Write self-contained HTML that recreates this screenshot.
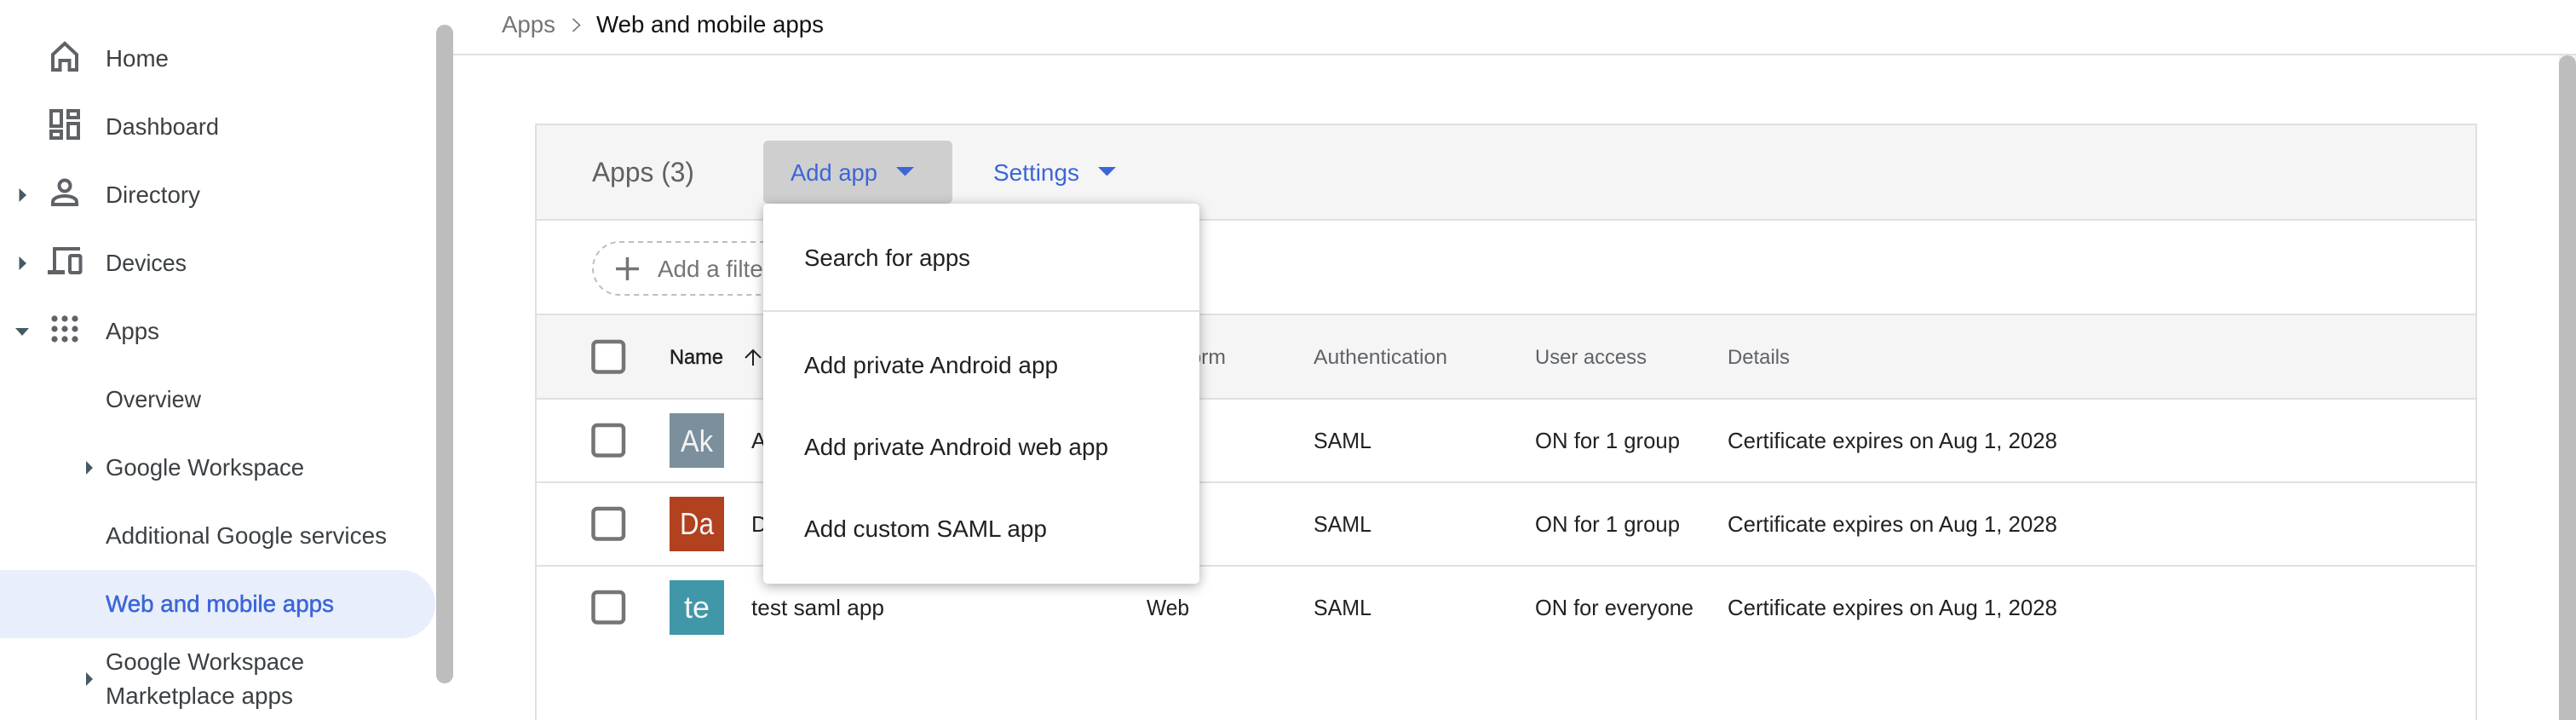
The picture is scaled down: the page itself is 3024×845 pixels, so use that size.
<!DOCTYPE html>
<html lang="en">
<head>
<meta charset="utf-8">
<title>Web and mobile apps</title>
<style>
html,body{margin:0;padding:0;width:3024px;height:845px;overflow:hidden;background:#fff}
svg{display:block}
text{font-family:"Liberation Sans",Arial,sans-serif;font-size:28px;white-space:pre}
.nav{fill:#3c4043}
.ic{fill:none;stroke:#5f6368;stroke-width:4}
.arr{fill:#455a64}
.th{font-size:24px;fill:#5f6368}
.td{font-size:26px;fill:#212121}
.mi{fill:#212121}
.cb{fill:#fff;stroke:#757575;stroke-width:4.5}
.av{font-size:36px;fill:#f4f4f4}
.ln{fill:#e0e0e0}
</style>
</head>
<body>
<svg width="3024" height="845" viewBox="0 0 3024 845" xmlns="http://www.w3.org/2000/svg">
<!-- header rule -->
<rect x="532" y="63" width="2492" height="2" class="ln"/>
<!-- breadcrumb -->
<text x="589" y="38" fill="#757575" textLength="63" lengthAdjust="spacingAndGlyphs">Apps</text>
<path d="M672.500 22l8 7.500-8 7.500" fill="none" stroke="#757575" stroke-width="1.600"/>
<text x="700" y="38" fill="#111" textLength="267" lengthAdjust="spacingAndGlyphs">Web and mobile apps</text>

<!-- sidebar -->
<path class="ic" d="M62 82H70.500V71H81.500V82H90V64L76 51L62 64Z"/>
<text class="nav" x="124" y="78" textLength="74" lengthAdjust="spacingAndGlyphs">Home</text>

<g class="ic">
<rect x="60" y="130" width="12" height="18"/>
<rect x="80" y="130" width="12" height="8"/>
<rect x="60" y="154" width="12" height="8"/>
<rect x="80" y="145" width="12" height="17"/>
</g>
<text class="nav" x="124" y="158" textLength="133" lengthAdjust="spacingAndGlyphs">Dashboard</text>

<path class="arr" d="M22.500 221L31 229L22.500 237Z"/>
<circle class="ic" cx="76" cy="218" r="6.500"/>
<path class="ic" d="M62 240V237C62 232 70 230 76 230S90 232 90 237V240Z"/>
<text class="nav" x="124" y="238" textLength="111" lengthAdjust="spacingAndGlyphs">Directory</text>

<path class="arr" d="M22.500 301L31 309L22.500 317Z"/>
<path class="ic" d="M94 292H64V318"/>
<rect x="56" y="317" width="20" height="5" fill="#5f6368"/>
<rect class="ic" x="82" y="300" width="12.500" height="20" rx="1.500"/>
<text class="nav" x="124" y="318" textLength="95" lengthAdjust="spacingAndGlyphs">Devices</text>

<path class="arr" d="M18 385H34L26 394Z"/>
<g fill="#5f6368">
<circle cx="64" cy="374" r="3.600"/><circle cx="76" cy="374" r="3.600"/><circle cx="88" cy="374" r="3.600"/>
<circle cx="64" cy="386" r="3.600"/><circle cx="76" cy="386" r="3.600"/><circle cx="88" cy="386" r="3.600"/>
<circle cx="64" cy="398" r="3.600"/><circle cx="76" cy="398" r="3.600"/><circle cx="88" cy="398" r="3.600"/>
</g>
<text class="nav" x="124" y="398" textLength="63" lengthAdjust="spacingAndGlyphs">Apps</text>

<text class="nav" x="124" y="478" textLength="112" lengthAdjust="spacingAndGlyphs">Overview</text>

<path class="arr" d="M101 541L109 549L101 557Z"/>
<text class="nav" x="124" y="558" textLength="233" lengthAdjust="spacingAndGlyphs">Google Workspace</text>

<text class="nav" x="124" y="638" textLength="330" lengthAdjust="spacingAndGlyphs">Additional Google services</text>

<path d="M0 669H471A40 40 0 0 1 471 749H0Z" fill="#e8eefb"/>
<text x="124" y="718" fill="#3b66d8" stroke="#3b66d8" stroke-width=".5" textLength="268" lengthAdjust="spacingAndGlyphs">Web and mobile apps</text>

<path class="arr" d="M101 789L109 797L101 805Z"/>
<text class="nav" x="124" y="786" textLength="233" lengthAdjust="spacingAndGlyphs">Google Workspace</text>
<text class="nav" x="124" y="826" textLength="220" lengthAdjust="spacingAndGlyphs">Marketplace apps</text>

<!-- sidebar scrollbar -->
<rect x="512" y="29" width="20" height="773" rx="10" fill="#bdbdbd"/>

<!-- page scrollbar -->
<rect x="3004" y="65" width="20" height="780" fill="#f1f1f1"/>
<path d="M3004 845V75A10 10 0 0 1 3024 75V845Z" fill="#bdbdbd"/>

<!-- card -->
<rect x="629" y="146" width="2278" height="720" fill="#fff" stroke="#e0e0e0" stroke-width="2"/>
<rect x="630" y="147" width="2276" height="110" fill="#f5f5f5"/>
<rect x="630" y="257" width="2276" height="2" class="ln"/>
<rect x="630" y="370" width="2276" height="97" fill="#f5f5f5"/>
<rect x="630" y="368" width="2276" height="2" class="ln"/>
<rect x="630" y="467" width="2276" height="2" class="ln"/>
<rect x="630" y="565" width="2276" height="2" class="ln"/>
<rect x="630" y="663" width="2276" height="2" class="ln"/>

<!-- card header -->
<text x="695" y="213" style="font-size:32px" fill="#616161" textLength="120" lengthAdjust="spacingAndGlyphs">Apps (3)</text>
<rect x="896" y="165" width="222" height="74" rx="6" fill="#cfcfcf"/>
<text x="928" y="212" fill="#3b66d8" textLength="102" lengthAdjust="spacingAndGlyphs">Add app</text>
<path d="M1052 196H1073L1062.500 206.500Z" fill="#3b66d8"/>
<text x="1166" y="212" fill="#3b66d8" textLength="101" lengthAdjust="spacingAndGlyphs">Settings</text>
<path d="M1289 196H1310L1299.500 206.500Z" fill="#3b66d8"/>

<!-- filter chip -->
<rect x="696" y="284" width="300" height="62" rx="31" fill="none" stroke="#bdbdbd" stroke-width="2" stroke-dasharray="6 5"/>
<path d="M736.500 302V329M723 315.500H750" stroke="#757575" stroke-width="3.500" fill="none"/>
<text x="772" y="325" fill="#757575" textLength="133" lengthAdjust="spacingAndGlyphs">Add a filter</text>

<!-- table head -->
<rect class="cb" x="696.500" y="401" width="35.500" height="35.500" rx="4.500"/>
<text x="786" y="427" style="font-size:24px" fill="#212121" stroke="#212121" stroke-width=".45" textLength="63" lengthAdjust="spacingAndGlyphs">Name</text>
<path d="M884 429V411M875 420L884 411L893 420" fill="none" stroke="#212121" stroke-width="2"/>
<text class="th" x="1347" y="427" textLength="92" lengthAdjust="spacingAndGlyphs">Platform</text>
<text class="th" x="1542" y="427" textLength="157" lengthAdjust="spacingAndGlyphs">Authentication</text>
<text class="th" x="1802" y="427" textLength="131" lengthAdjust="spacingAndGlyphs">User access</text>
<text class="th" x="2028" y="427" textLength="73" lengthAdjust="spacingAndGlyphs">Details</text>

<!-- row 1 -->
<rect class="cb" x="696.500" y="499" width="35.500" height="35.500" rx="4.500"/>
<rect x="786" y="485" width="64" height="64" fill="#7b8f9d"/>
<text class="av" x="799" y="530" textLength="38" lengthAdjust="spacingAndGlyphs">Ak</text>
<text class="td" x="882" y="526">A</text>
<text class="td" x="1542" y="526" textLength="68" lengthAdjust="spacingAndGlyphs">SAML</text>
<text class="td" x="1802" y="526" textLength="170" lengthAdjust="spacingAndGlyphs">ON for 1 group</text>
<text class="td" x="2028" y="526" textLength="387" lengthAdjust="spacingAndGlyphs">Certificate expires on Aug 1, 2028</text>

<!-- row 2 -->
<rect class="cb" x="696.500" y="597" width="35.500" height="35.500" rx="4.500"/>
<rect x="786" y="583" width="64" height="64" fill="#b1411f"/>
<text class="av" x="798" y="627" textLength="40" lengthAdjust="spacingAndGlyphs">Da</text>
<text class="td" x="882" y="624">D</text>
<text class="td" x="1542" y="624" textLength="68" lengthAdjust="spacingAndGlyphs">SAML</text>
<text class="td" x="1802" y="624" textLength="170" lengthAdjust="spacingAndGlyphs">ON for 1 group</text>
<text class="td" x="2028" y="624" textLength="387" lengthAdjust="spacingAndGlyphs">Certificate expires on Aug 1, 2028</text>

<!-- row 3 -->
<rect class="cb" x="696.500" y="695" width="35.500" height="35.500" rx="4.500"/>
<rect x="786" y="681" width="64" height="64" fill="#4097a8"/>
<text class="av" x="803" y="725" textLength="30" lengthAdjust="spacingAndGlyphs">te</text>
<text class="td" x="882" y="722" textLength="156" lengthAdjust="spacingAndGlyphs">test saml app</text>
<text class="td" x="1346" y="722" textLength="50" lengthAdjust="spacingAndGlyphs">Web</text>
<text class="td" x="1542" y="722" textLength="68" lengthAdjust="spacingAndGlyphs">SAML</text>
<text class="td" x="1802" y="722" textLength="186" lengthAdjust="spacingAndGlyphs">ON for everyone</text>
<text class="td" x="2028" y="722" textLength="387" lengthAdjust="spacingAndGlyphs">Certificate expires on Aug 1, 2028</text>

<!-- dropdown menu -->
<rect x="896" y="239" width="512" height="446" rx="5" fill="#fff" style="filter:drop-shadow(0 3px 7px rgba(0,0,0,.32))"/>
<rect x="896" y="364" width="512" height="2" class="ln"/>
<text class="mi" x="944" y="312" textLength="195" lengthAdjust="spacingAndGlyphs">Search for apps</text>
<text class="mi" x="944" y="438" textLength="298" lengthAdjust="spacingAndGlyphs">Add private Android app</text>
<text class="mi" x="944" y="534" textLength="357" lengthAdjust="spacingAndGlyphs">Add private Android web app</text>
<text class="mi" x="944" y="630" textLength="285" lengthAdjust="spacingAndGlyphs">Add custom SAML app</text>
</svg>
</body>
</html>
